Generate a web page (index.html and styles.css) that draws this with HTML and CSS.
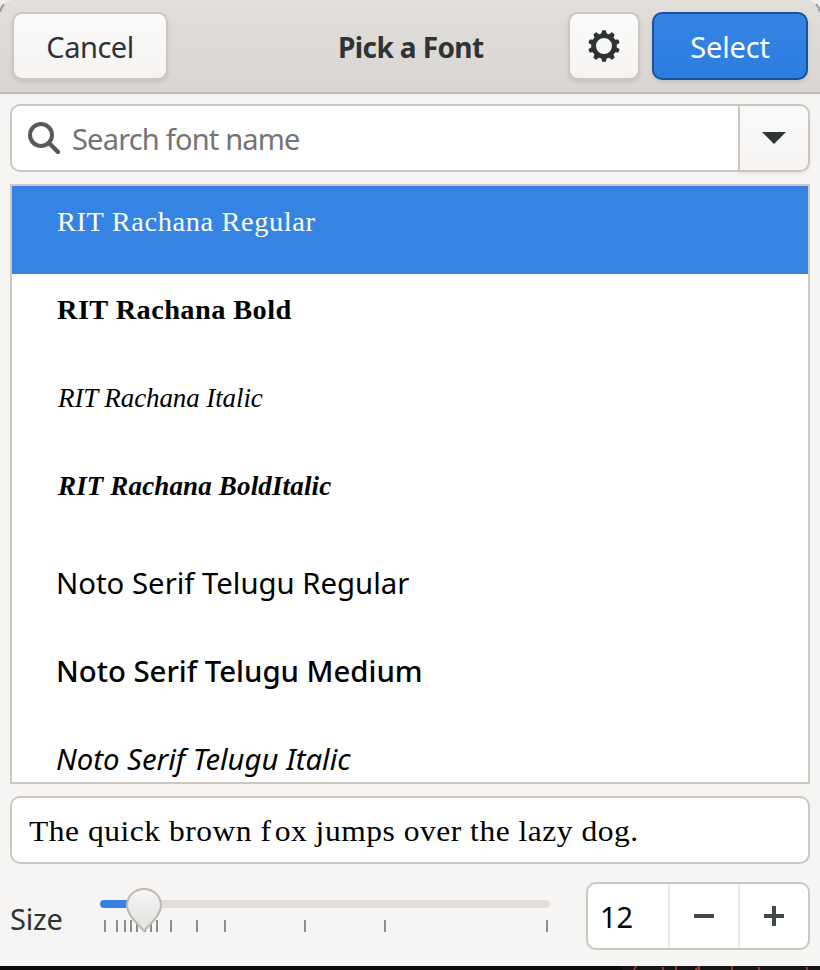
FILE: index.html
```html
<!DOCTYPE html>
<html lang="en">
<head>
<meta charset="utf-8">
<title>Pick a Font</title>
<link rel="stylesheet" href="styles.css">
</head>
<body>
<div class="dialog">
  <header class="headerbar">
    <button class="btn cancel"><span class="t-cancel">Cancel</span></button>
    <h1 class="title"><span>Pick a Font</span></h1>
    <button class="btn gear" aria-label="Settings">
      <svg width="32" height="32" viewBox="-16 -16 32 32">
        <circle r="10.4" fill="none" stroke="#2e3436" stroke-width="4.800"/>
        <g fill="#2e3436" stroke="#2e3436" stroke-width="1.600" stroke-linejoin="round">
          <path id="tooth" d="M-2.200-11L-1.200-15H1.200L2.200-11Z"/>
          <use href="#tooth" transform="rotate(36)"/><use href="#tooth" transform="rotate(72)"/>
          <use href="#tooth" transform="rotate(108)"/><use href="#tooth" transform="rotate(144)"/>
          <use href="#tooth" transform="rotate(180)"/><use href="#tooth" transform="rotate(216)"/>
          <use href="#tooth" transform="rotate(252)"/><use href="#tooth" transform="rotate(288)"/>
          <use href="#tooth" transform="rotate(324)"/>
        </g>
      </svg>
    </button>
    <button class="btn select"><span class="t-select">Select</span></button>
  </header>
  <main class="content">
    <div class="search-row">
      <div class="search">
        <svg width="32" height="32" viewBox="0 0 32 32" fill="none" stroke="#555b5b">
          <circle cx="13" cy="13" r="11" stroke-width="4"/>
          <path d="M21 21L30 30" stroke-width="4.4" stroke-linecap="round"/>
        </svg>
        <span class="t-search">Search font name</span>
      </div>
      <button class="filter" aria-label="Filter">
        <svg width="24" height="12" viewBox="0 0 24 12"><path d="M0 0H24L12 12Z" fill="#2e3436"/></svg>
      </button>
    </div>
    <ul class="list">
      <li class="row selected serif"><span class="f1">RIT Rachana Regular</span></li>
      <li class="row serif"><span class="f2">RIT Rachana Bold</span></li>
      <li class="row serif"><span class="f3">RIT Rachana Italic</span></li>
      <li class="row serif"><span class="f4">RIT Rachana BoldItalic</span></li>
      <li class="row sans"><span class="f5">Noto Serif Telugu Regular</span></li>
      <li class="row sans"><span class="f6">Noto Serif Telugu Medium</span></li>
      <li class="row sans"><span class="f7">Noto Serif Telugu Italic</span></li>
    </ul>
    <div class="preview"><span class="t-preview">The quick brown <span class="wide-f">f</span>ox jumps over the lazy dog.</span></div>
    <div class="size-row">
      <span class="t-size">Size</span>
      <svg class="scale" width="454" height="60" viewBox="98 880 454 60">
        <defs><linearGradient id="knob" x1="0" y1="0" x2="0" y2="1"><stop offset="0" stop-color="#f6f5f5"/><stop offset="1" stop-color="#e3e2e1"/></linearGradient></defs>
        <rect x="100" y="900" width="450" height="8" rx="4" fill="#e1dedb"/>
        <rect x="100" y="900" width="50" height="8" rx="4" fill="#3584e4"/>
        <path d="M105 920v12M117 920v12M125 920v12M131 920v12M137 920v12M145 920v12M151 920v12M157 920v12M171 920v12M197 920v12M225 920v12M305 920v12M385 920v12M547 920v12" stroke="#8b8e8e" stroke-width="2"/>
        <path d="M144 889C134 889 127 896.500 127 905.500C127 911 129.500 914.500 133 919L144 931L155 919C158.500 914.500 161 911 161 905.500C161 896.500 154 889 144 889Z" fill="url(#knob)" stroke="#bfb8b1" stroke-width="2"/>
      </svg>
      <div class="spin">
        <span class="value"><span class="t-value">12</span></span>
        <button aria-label="Decrease"><svg width="20" height="20"><path d="M0 10H20" stroke="#434849" stroke-width="4"/></svg></button>
        <button aria-label="Increase"><svg width="20" height="20"><path d="M0 10H20M10 0V20" stroke="#434849" stroke-width="4"/></svg></button>
      </div>
    </div>
  </main>
</div>
<svg class="backdrop" width="820" height="4" viewBox="0 0 820 4">
  <path d="M622 0H820V4H622Z" fill="#151416"/>
  <path d="M636 0L634 4M663 1V4M676 0V4M695 4L699 1V4M732 0V4M759 1V4M807 1V4" fill="none" stroke="#a33a35" stroke-width="1.800"/>
</svg>
</body>
</html>
```
FILE: styles.css
```css
* { box-sizing: border-box; }
body { margin: 0; background: #efeeed; font-family: "Noto Sans", sans-serif; font-size: 29px; line-height: 40px; color: #2e3436; overflow: hidden; }
button { font: inherit; color: inherit; padding: 0; margin: 0; }
svg { display: block; flex: none; }
span { display: inline-block; white-space: nowrap; }
.dialog { height: 966px; background: #f6f5f4; border-radius: 14px 14px 0 0; }
.headerbar { height: 94px; padding: 12px; display: grid; grid-template-columns: 156px 1fr 72px 156px; column-gap: 12px; align-items: start; background: linear-gradient(#e1dedb, #dad6d2); border-bottom: 2px solid #bfb8b1; border-radius: 14px 14px 0 0; position: relative; }
.headerbar::before { content: ""; position: absolute; inset: -1px -1px auto; height: 14px; border: 2px solid #9a9b9a; border-width: 2px 2px 0; border-color: transparent #9a9b9a; border-radius: 15px 15px 0 0; clip-path: inset(0 0 3px 0); }
.btn { height: 68px; padding-top: 1px; display: flex; align-items: center; justify-content: center; border: 2px solid #cdc7c2; border-radius: 10px; background: linear-gradient(#fbfafa, #f5f4f2); box-shadow: 0 2px 4px #0000001a; }
.gear { padding-top: 0; }
.t-cancel { letter-spacing: -0.5px; }
.select { color: #fff; background: linear-gradient(#3584e4, #2b7de1); border-color: #15539e; }
.t-select { letter-spacing: -0.2px; }
.title { margin: 0; height: 69px; padding-left: 158px; display: flex; align-items: center; font-size: 28px; font-weight: 700; letter-spacing: -0.6px; }
.content { padding: 10px 10px 0; }
.search-row { height: 68px; display: flex; }
.search { width: 728px; display: flex; align-items: center; gap: 12px; padding-left: 16px; background: #fff; border: 2px solid #cdc7c2; border-right: 0; border-radius: 10px 0 0 10px; color: #747474; }
.t-search { letter-spacing: -0.8px; margin-top: 2px; }
.filter { flex: 1; display: flex; align-items: center; justify-content: center; border: 2px solid #cdc7c2; border-radius: 0 10px 10px 0; background: linear-gradient(#fbfafa, #f5f4f2); box-shadow: 0 2px 3px #00000012; }
.list { list-style: none; margin: 12px 0; padding: 0; height: 600px; overflow: hidden; background: #fff; border: 2px solid #cdc7c2; color: #000; }
.row { height: 88px; padding: 16px 0 0 45px; }
.selected { background: #3584e4; color: #fff; }
.serif { font-family: "Liberation Serif", serif; font-size: 27px; }
.sans { padding: 25px 0 0 44px; font-size: 29.33px; }
.f1, .f2, .t-preview { transform: scaleX(1.05); transform-origin: left; }
.f1 { letter-spacing: 0.6px; }
.f2 { letter-spacing: 0.4px; }
.f4 { letter-spacing: 0.15px; }
.f2, .f4 { font-weight: 700; }
.f3, .f4, .f7 { font-style: italic; }
.f3, .f4 { padding-left: 1px; }
.f3 { letter-spacing: -0.1px; }
.f6 { font-weight: 500; }
.preview { height: 68px; padding: 2px 0 0 17px; display: flex; align-items: center; background: #fff; border: 2px solid #cdc7c2; border-radius: 10px; color: #000; font-family: "Liberation Serif", serif; font-size: 30px; letter-spacing: 0.5px; }
.wide-f { margin-right: 3px; }
.size-row { height: 86px; margin-top: 16px; display: grid; grid-template-columns: 88px 454px 1fr; align-items: start; }
.t-size { margin-top: 19px; letter-spacing: -0.2px; }
.spin { margin: 2px 0 0 34px; height: 68px; display: flex; background: #fff; border: 2px solid #cdc7c2; border-radius: 10px; }
.value { width: 80px; padding: 13px 0 0 12px; color: #000; }
.spin button { flex: 1; display: flex; align-items: center; justify-content: center; border: 0; border-left: 2px solid #edebe9; background: none; }
.backdrop { background: #0d0a0d; }
```
